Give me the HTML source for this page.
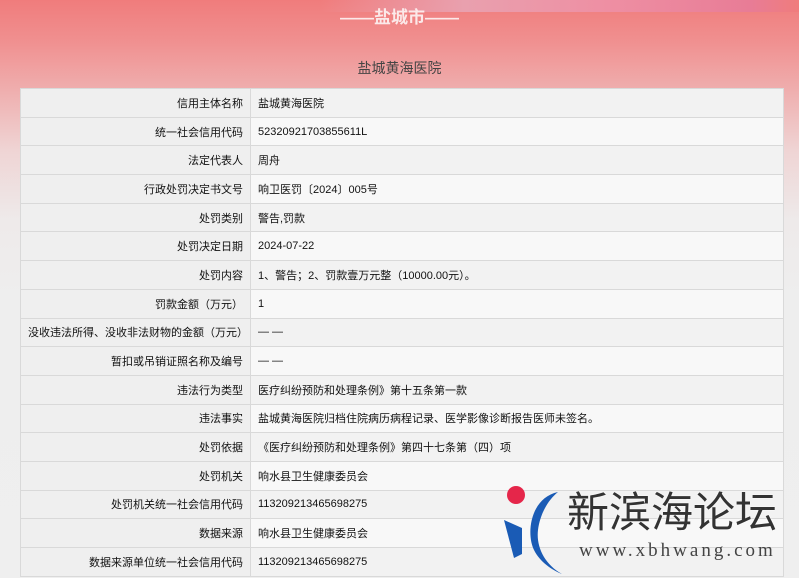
<!DOCTYPE html>
<html><head><meta charset="utf-8"><style>
*{margin:0;padding:0;box-sizing:border-box}
body{width:799px;height:584px;overflow:hidden;position:relative;font-family:"Liberation Sans","Noto Sans CJK SC",sans-serif;background:#fff}
.bg{position:absolute;left:0;top:0;width:799px;height:578px;background:linear-gradient(#f07c7c 0px,#f08f8f 40px,#efaeae 90px,#efd4d4 150px,#eeeaea 220px,#eeeeee 300px,#efefef 578px)}
.banner{position:absolute;left:320px;top:0;width:479px;height:12px;background:linear-gradient(90deg,rgba(240,124,124,0),#e9a0ae 30%,#ee8fa3 60%,#e87c96 90%,#f07c7c)}
.city{position:absolute;left:0;width:799px;top:3px;text-align:center;color:#fbe9e9;font-size:17px;font-weight:bold}
.title{position:absolute;left:0;width:799px;top:58px;text-align:center;color:#444;font-size:14px}
table{position:absolute;left:20px;top:88px;width:764px;border-collapse:collapse;table-layout:fixed;font-size:11px;color:#111}
td{height:28.7px;border:1px solid #d9d9d9;padding:0 7px;white-space:nowrap;overflow:hidden}
td.l{text-align:right;background:#efefef}
tr:nth-child(odd) td.v{background:#f2f2f2}
tr:nth-child(even) td.v{background:#f8f8f8}
.logo{position:absolute;left:500px;top:484px;width:290px;height:90px}
.logo .t{position:absolute;left:67px;top:2px;font-size:42px;color:#333;line-height:48px;text-shadow:0 0 2px #fff;font-family:"Noto Sans CJK SC",sans-serif}
.logo .u{position:absolute;left:79px;top:56px;font-size:19px;color:#444;font-family:"Liberation Serif",serif;letter-spacing:3px}
</style></head><body>
<div class="bg"></div>
<div class="banner"></div>
<div class="city">——盐城市——</div>
<div class="title">盐城黄海医院</div>
<table>
<colgroup><col style="width:230px"><col></colgroup>
<tr><td class="l">信用主体名称</td><td class="v">盐城黄海医院</td></tr>
<tr><td class="l">统一社会信用代码</td><td class="v">52320921703855611L</td></tr>
<tr><td class="l">法定代表人</td><td class="v">周舟</td></tr>
<tr><td class="l">行政处罚决定书文号</td><td class="v">响卫医罚〔2024〕005号</td></tr>
<tr><td class="l">处罚类别</td><td class="v">警告,罚款</td></tr>
<tr><td class="l">处罚决定日期</td><td class="v">2024-07-22</td></tr>
<tr><td class="l">处罚内容</td><td class="v">1、警告；2、罚款壹万元整（10000.00元）。</td></tr>
<tr><td class="l">罚款金额（万元）</td><td class="v">1</td></tr>
<tr><td class="l">没收违法所得、没收非法财物的金额（万元）</td><td class="v">— —</td></tr>
<tr><td class="l">暂扣或吊销证照名称及编号</td><td class="v">— —</td></tr>
<tr><td class="l">违法行为类型</td><td class="v">医疗纠纷预防和处理条例》第十五条第一款</td></tr>
<tr><td class="l">违法事实</td><td class="v">盐城黄海医院归档住院病历病程记录、医学影像诊断报告医师未签名。</td></tr>
<tr><td class="l">处罚依据</td><td class="v">《医疗纠纷预防和处理条例》第四十七条第（四）项</td></tr>
<tr><td class="l">处罚机关</td><td class="v">响水县卫生健康委员会</td></tr>
<tr><td class="l">处罚机关统一社会信用代码</td><td class="v">113209213465698275</td></tr>
<tr><td class="l">数据来源</td><td class="v">响水县卫生健康委员会</td></tr>
<tr><td class="l">数据来源单位统一社会信用代码</td><td class="v">113209213465698275</td></tr>
</table>
<div class="logo">
<svg width="80" height="90" style="position:absolute;left:0;top:0">
<circle cx="16" cy="11" r="9" fill="#e5264a"/>
<path d="M4 36 L22 44 L22 70 L14 74 Z" fill="#1a5bb5"/>
<path d="M58 8 C30 14 26 50 34 66 C40 78 52 86 62 90 C44 80 36 62 38 46 C40 30 48 16 58 8 Z" fill="#1a5bb5"/>
</svg>
<div class="t">新滨海论坛</div>
<div class="u">www.xbhwang.com</div>
</div>
</body></html>
